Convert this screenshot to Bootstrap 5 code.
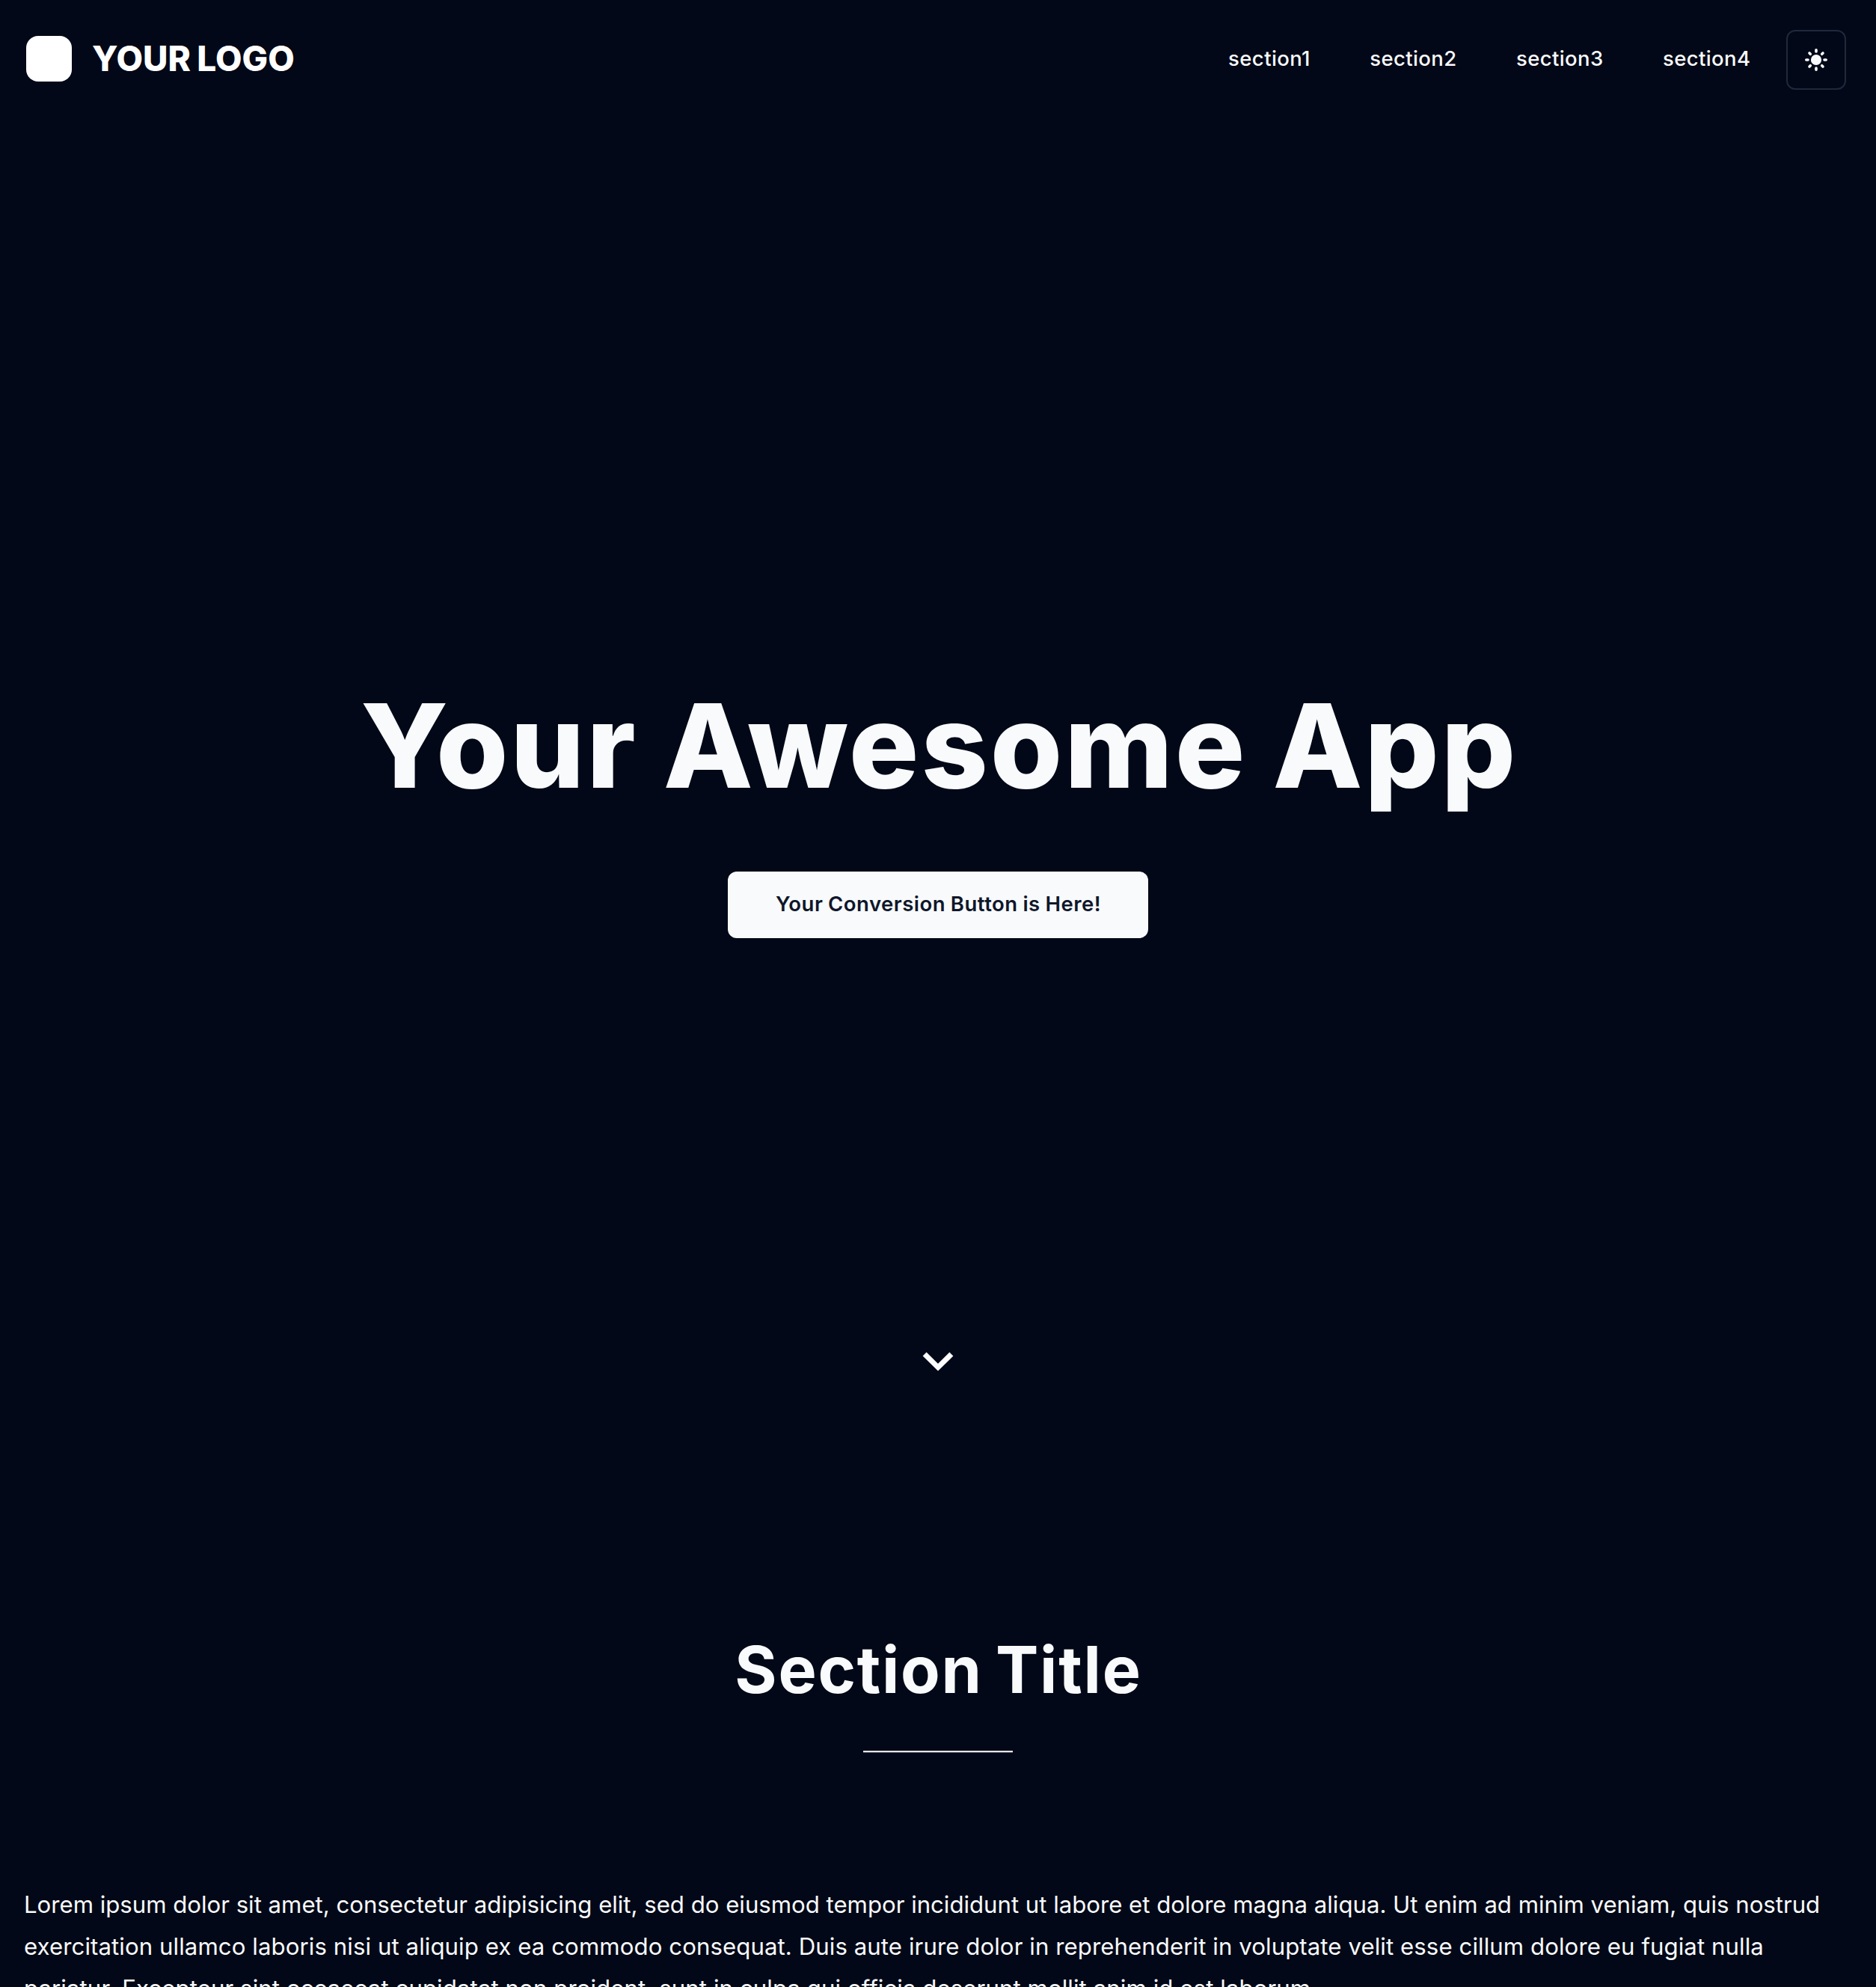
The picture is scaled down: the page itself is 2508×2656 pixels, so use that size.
<!DOCTYPE html>
<html lang="en">
<head>
<meta charset="utf-8">
<meta name="viewport" content="width=device-width, initial-scale=1">
<title>Your Awesome App</title>
<link href="https://cdn.jsdelivr.net/npm/bootstrap@5.3.0/dist/css/bootstrap.min.css" rel="stylesheet">
<style>
  body { background: #020817; color: #f8fafc; font-family: Inter, "Liberation Sans", sans-serif; }
  .page { height: 2656px; }
  .site-header { height: 160px; padding: 0 40px 0 35px; }
  .logo-mark { width: 61px; height: 61px; border-radius: 16px; background: #fff; margin-top: -3px; }
  .logo-text { font-size: 46px; font-weight: 800; line-height: 56px; letter-spacing: 0; word-spacing: -1.6px; margin: -4px 0 0 27px; color: #fff; }
  .site-nav { gap: 79.3px; margin-right: 47.5px; padding-bottom: 4px; }
  .site-nav a { font-size: 27.5px; font-weight: 500; letter-spacing: .4px; line-height: 40px; padding: 0; color: #f8fafc; }
  .theme-btn { width: 80px; height: 80px; border: 2px solid #1e293b; border-radius: 12px; background: transparent; padding: 0; color: #f8fafc; }
  .hero { padding-top: 757px; }
  .hero h1 { font-size: 156px; font-weight: 800; line-height: 160px; letter-spacing: 2.9px; word-spacing: -3px; margin: 0; padding-left: 3px; }
  .cta { width: 562px; height: 89px; margin-top: 88px; border: 0; border-radius: 12px; background: #f8fafc; color: #0f172a; font-size: 27.5px; font-weight: 600; letter-spacing: .5px; word-spacing: -.7px; line-height: 40px; padding: 0 0 4px 1px; }
  .cta:hover { background: #e2e8f0; color: #0f172a; }
  .scroll-cue { margin-top: 546px; line-height: 0; color: #fff; }
  .about { padding: 336px 32px 0; }
  .about h2 { font-size: 86px; font-weight: 700; line-height: 96px; letter-spacing: 1.75px; word-spacing: -5px; margin: 0; padding-left: 1px; }
  .title-rule { width: 200px; height: 3px; margin: 60px 0 0; opacity: 1; border: 0; background: linear-gradient(#bcbdc1 0 1px, #fff 1px 2px, #55586a 2px 3px); }
  .about p { font-size: 31.2px; line-height: 56px; margin: 174.5px 0 0; }
  .about p span { display: block; white-space: nowrap; }
  .line-a { letter-spacing: -.02px; }
  .line-b { letter-spacing: .074px; }
  .line-c { letter-spacing: .075px; }
</style>
</head>
<body>
<div class="page overflow-hidden">
  <header class="site-header d-flex align-items-center justify-content-between">
    <a href="#" class="d-flex align-items-center text-decoration-none">
      <span class="logo-mark"></span>
      <span class="logo-text">YOUR LOGO</span>
    </a>
    <div class="d-flex align-items-center">
      <nav class="site-nav nav">
        <a class="nav-link" href="#s1">section1</a>
        <a class="nav-link" href="#s2">section2</a>
        <a class="nav-link" href="#s3">section3</a>
        <a class="nav-link" href="#s4">section4</a>
      </nav>
      <button class="theme-btn btn d-flex align-items-center justify-content-center" type="button" aria-label="Toggle theme">
        <svg width="32" height="32" viewBox="-16 -16 32 32" stroke="currentColor" stroke-width="3.6" stroke-linecap="round">
          <circle r="7.1" fill="currentColor" stroke="none"/>
          <path d="M0-13.2V-11M0 13.2V11M-13.2 0H-11M13.2 0H11M-9-9L-7.7-7.7M9-9L7.7-7.7M-9 9L-7.7 7.7M9 9L7.7 7.7"/>
        </svg>
      </button>
    </div>
  </header>
  <main>
    <section class="hero d-flex flex-column align-items-center">
      <h1 class="text-center">Your Awesome App</h1>
      <button class="cta btn" type="button">Your Conversion Button is Here!</button>
      <a class="scroll-cue" href="#s1" aria-label="Scroll down">
        <svg width="48" height="48" viewBox="0 0 48 48" fill="none" stroke="currentColor" stroke-width="7" stroke-linecap="butt">
          <path d="M6.1 10.1L24 27.7L41.9 10.1"/>
        </svg>
      </a>
    </section>
    <section class="about d-flex flex-column align-items-center" id="s1">
      <h2 class="text-center">Section Title</h2>
      <hr class="title-rule">
      <p class="w-100">
        <span class="line-a">Lorem ipsum dolor sit amet, consectetur adipisicing elit, sed do eiusmod tempor incididunt ut labore et dolore magna aliqua. Ut enim ad minim veniam, quis nostrud</span>
        <span class="line-b">exercitation ullamco laboris nisi ut aliquip ex ea commodo consequat. Duis aute irure dolor in reprehenderit in voluptate velit esse cillum dolore eu fugiat nulla</span>
        <span class="line-c">pariatur. Excepteur sint occaecat cupidatat non proident, sunt in culpa qui officia deserunt mollit anim id est laborum.</span>
      </p>
    </section>
  </main>
</div>
<script src="https://cdn.jsdelivr.net/npm/bootstrap@5.3.0/dist/js/bootstrap.bundle.min.js"></script>
</body>
</html>
